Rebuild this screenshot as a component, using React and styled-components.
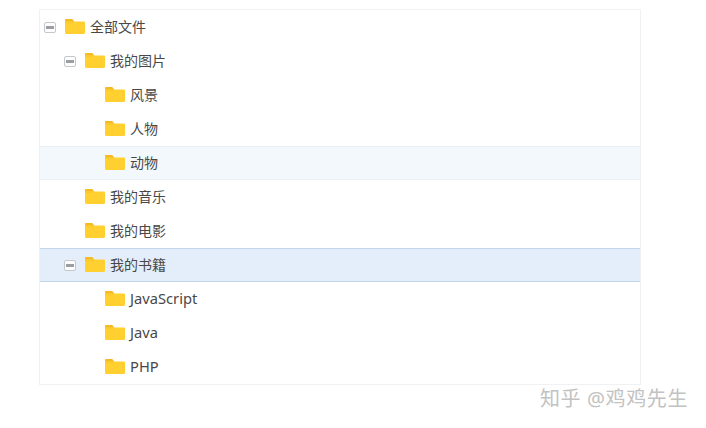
import React from "react";
import styled, { createGlobalStyle } from "styled-components";

const Global = createGlobalStyle`
  html, body { margin: 0; padding: 0; background: #fff; }
  body { font-family: "Noto Sans", "Noto Sans CJK SC", sans-serif; }
`;

const Page = styled.div`
  position: relative;
  width: 706px;
  height: 428px;
  padding: 9px 0 0 39px;
  box-sizing: border-box;
  overflow: hidden;
`;

const Tree = styled.div`
  width: 602px;
  box-sizing: border-box;
  border: 1px solid #f0f1f3;
  display: flex;
  flex-direction: column;
`;

const Row = styled.div`
  height: 34px;
  box-sizing: border-box;
  display: flex;
  align-items: center;
  padding-left: ${(p) => 4 + p.$level * 20}px;
  background: ${(p) =>
    p.$state === "selected" ? "#e4eefa" : p.$state === "hover" ? "#f3f8fd" : "#fff"};
  border-top: 1px solid
    ${(p) =>
      p.$state === "selected" ? "#c2d6e9" : p.$state === "hover" ? "#e9f0f6" : "transparent"};
  border-bottom: 1px solid
    ${(p) =>
      p.$state === "selected" ? "#c2d6e9" : p.$state === "hover" ? "#e9f0f6" : "transparent"};
`;

const ToggleSlot = styled.span`
  width: 21px;
  flex: none;
  display: flex;
  align-items: center;
`;

const Toggle = styled.span`
  position: relative;
  width: 12px;
  height: 11px;
  box-sizing: border-box;
  border: 1px solid #c4c7cb;
  border-radius: 2px;
  background: #fdfdfd;
  &::after {
    content: "";
    position: absolute;
    left: 1px;
    right: 1px;
    top: 3px;
    height: 3px;
    background: #9a9da1;
  }
`;

const FolderIcon = styled.svg`
  width: 20px;
  height: 15px;
  flex: none;
  display: block;
  margin-top: -1px;
`;

const Label = styled.span`
  margin-left: 5px;
  font-size: ${(p) => (p.$latin ? "14.7px" : "14px")};
  line-height: 20px;
  margin-top: ${(p) => (p.$latin ? "-2px" : "0")};
  color: #484848;
  white-space: nowrap;
`;

const Watermark = styled.div`
  position: absolute;
  left: 540px;
  top: 385px;
  font-size: 20px;
  line-height: 28px;
  color: #c2c2c2;
  letter-spacing: 0.6px;
  white-space: nowrap;
`;

const Folder = () => (
  <FolderIcon viewBox="0 0 20 15">
    <path d="M0 1.200C0 .5.5 0 1.200 0h6l2.200 2.400H0z" fill="#f5b921" />
    <path d="M0 2.400h18.800c.7 0 1.200.5 1.200 1.200v10.200c0 .7-.5 1.200-1.200 1.200H1.200C.5 15 0 14.500 0 13.800z" fill="#ffd02f" />
    <path d="M0 2.200h9.400L8.300 3.400H0z" fill="#f8c326" />
  </FolderIcon>
);

const items = [
  { label: "全部文件", level: 0, open: true },
  { label: "我的图片", level: 1, open: true },
  { label: "风景", level: 2 },
  { label: "人物", level: 2 },
  { label: "动物", level: 2, state: "hover" },
  { label: "我的音乐", level: 1 },
  { label: "我的电影", level: 1 },
  { label: "我的书籍", level: 1, open: true, state: "selected" },
  { label: "JavaScript", level: 2, latin: true },
  { label: "Java", level: 2, latin: true },
  { label: "PHP", level: 2, latin: true },
];

export default function App() {
  return (
    <Page>
      <Global />
      <Tree>
        {items.map((it) => (
          <Row key={it.label} $level={it.level} $state={it.state}>
            <ToggleSlot>{it.open && <Toggle />}</ToggleSlot>
            <Folder />
            <Label $latin={it.latin}>{it.label}</Label>
          </Row>
        ))}
      </Tree>
      <Watermark>知乎 @鸡鸡先生</Watermark>
    </Page>
  );
}
